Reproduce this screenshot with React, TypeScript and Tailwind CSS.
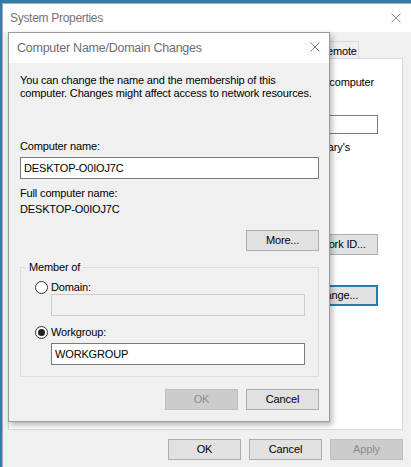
import React from "react";

function XIcon({ color = "#6f6f6f" }: { color?: string }) {
  return (
    <svg width="10" height="10" viewBox="0 0 10 10" fill="none">
      <path d="M0.5 0.5 L9.5 9.5 M9.5 0.5 L0.5 9.5" stroke={color} strokeWidth="1" />
    </svg>
  );
}

function Btn({
  children,
  disabled,
  focused,
  w = "w-[73px]",
}: {
  children: React.ReactNode;
  disabled?: boolean;
  focused?: boolean;
  w?: string;
}) {
  let cls = "bg-[#e1e1e1] border border-[#adadad] text-black";
  if (disabled) cls = "bg-[#cccccc] border border-[#bfbfbf] text-[#8c8c8c]";
  if (focused) cls = "bg-[#e1e1e1] border-2 border-[#2b79b0] text-black";
  return (
    <div className={`${w} h-[21px] flex items-center justify-center leading-[13px] shrink-0 ${cls}`}>
      {children}
    </div>
  );
}

function Radio({ checked }: { checked?: boolean }) {
  return (
    <div className="w-[13px] h-[13px] rounded-full border border-[#333333] bg-white flex items-center justify-center shrink-0">
      {checked && <div className="w-[7px] h-[7px] rounded-full bg-[#222222]" />}
    </div>
  );
}

export default function App() {
  return (
    <div className="relative w-[411px] h-[467px] overflow-hidden bg-[#2e7fab] font-['Liberation_Sans',Arial,sans-serif] text-[11px] tracking-[-0.15px] text-black">
      {/* Outer window: System Properties */}
      <div className="absolute z-0 left-[2px] top-[3px] w-[418px] h-[470px] border border-[#a9a9a9] bg-[#f0f0f0] flex flex-col">
        <div className="h-[28px] bg-white flex items-center justify-between shrink-0">
          <span className="pl-[7px] text-[12px] tracking-[-0.3px] text-[#737373]">System Properties</span>
          <div className="w-[46px] h-full flex items-center justify-center">
            <XIcon color="#8a8a8a" />
          </div>
        </div>
        <div className="flex flex-col pl-[5px] pr-[16px]">
          {/* Tabs (the ones left of "Remote" lie under the dialog) */}
          <div className="mt-[9px] h-[17px] ml-[2px] flex items-end">
            <div className="w-[92px] h-[20px] -mb-px bg-white border border-[#d9d9d9] border-b-0" />
            <div className="w-[62px] h-[17px] bg-[#f0f0f0] border border-[#d9d9d9] border-b-0 border-l-0" />
            <div className="w-[62px] h-[17px] bg-[#f0f0f0] border border-[#d9d9d9] border-b-0 border-l-0" />
            <div className="w-[91px] h-[17px] bg-[#f0f0f0] border border-[#d9d9d9] border-b-0 border-l-0" />
            <div className="w-[42px] h-[17px] bg-[#f0f0f0] border border-[#d9d9d9] border-b-0 flex items-center justify-center pt-[2px]">
              Remote
            </div>
          </div>
          {/* Panel */}
          <div className="h-[372px] bg-white border border-[#d9d9d9] flex flex-col pl-[12px] pr-[24px] leading-[13px]">
            <div className="mt-[17px] flex justify-end pr-[4px]">
              <span className="whitespace-nowrap">computer</span>
            </div>
            <div className="h-[13px]" />
            <div className="mt-[13px] flex items-center justify-end">
              <div className="w-[240px] h-[19px] border border-[#7a7a7a] bg-white" />
            </div>
            <div className="mt-[7px] flex justify-end pr-[28px]">
              <span className="whitespace-nowrap">Mary's</span>
            </div>
            <div className="h-[13px]" />
            <div className="mt-[13px] h-[13px]" />
            <div className="mt-[5px] h-[13px]" />
            <div className="mt-[23px] flex items-start justify-end h-[26px]">
              <Btn w="w-[86px]">Network ID...</Btn>
            </div>
            <div className="mt-[25px] flex items-start justify-end">
              <Btn w="w-[86px]" focused>Change...</Btn>
            </div>
          </div>
          {/* Bottom buttons */}
          <div className="mt-[9px] flex justify-end gap-[8px]">
            <Btn>OK</Btn>
            <Btn>Cancel</Btn>
            <Btn disabled>Apply</Btn>
          </div>
        </div>
      </div>

      {/* Inner dialog: Computer Name/Domain Changes */}
      <div className="absolute z-20 left-[8px] top-[32px] w-[322px] h-[390px] border border-[#9b9b9b] bg-[#f0f0f0] shadow-[2px_3px_6px_rgba(0,0,0,0.3)] flex flex-col">
        <div className="h-[30px] bg-white flex items-center justify-between shrink-0">
          <span className="pl-[8px] text-[12.5px] tracking-[-0.25px] text-[#6e6e6e]">Computer Name/Domain Changes</span>
          <div className="mr-[9px] -mt-[2px] flex">
            <XIcon color="#7a7a7a" />
          </div>
        </div>
        <div className="flex flex-col pl-[11px] pr-[10px] leading-[13px]">
          <p className="mt-[11px]">
            You can change the name and the membership of this
            <br />
            computer. Changes might affect access to network resources.
          </p>
          <div className="mt-[40px]">Computer name:</div>
          <div className="mt-[4px] h-[22px] border border-[#7a7a7a] bg-white flex items-center px-[3px]">
            DESKTOP-O0IOJ7C
          </div>
          <div className="mt-[8px]">Full computer name:</div>
          <div className="mt-[3px]">DESKTOP-O0IOJ7C</div>
          <div className="mt-[14px] self-end">
            <Btn>More...</Btn>
          </div>
          <fieldset className="mt-[10px] border border-[#dcdcdc] pb-[11px]">
            <legend className="ml-[5px] px-[3px] leading-[13px]">Member of</legend>
            <div className="mt-[7px] pl-[14px] flex items-center gap-[3px] h-[13px]">
              <Radio />
              <span>Domain:</span>
            </div>
            <div className="ml-[30px] w-[254px] h-[22px] border border-[#cccccc] bg-[#f0f0f0]" />
            <div className="mt-[10px] pl-[14px] flex items-center gap-[3px] h-[13px]">
              <Radio checked />
              <span>Workgroup:</span>
            </div>
            <div className="mt-[4px] ml-[30px] w-[254px] h-[22px] border border-[#7a7a7a] bg-white flex items-center px-[3px]">
              WORKGROUP
            </div>
          </fieldset>
          <div className="mt-[12px] flex justify-end gap-[8px]">
            <Btn disabled>OK</Btn>
            <Btn>Cancel</Btn>
          </div>
        </div>
      </div>
    </div>
  );
}
